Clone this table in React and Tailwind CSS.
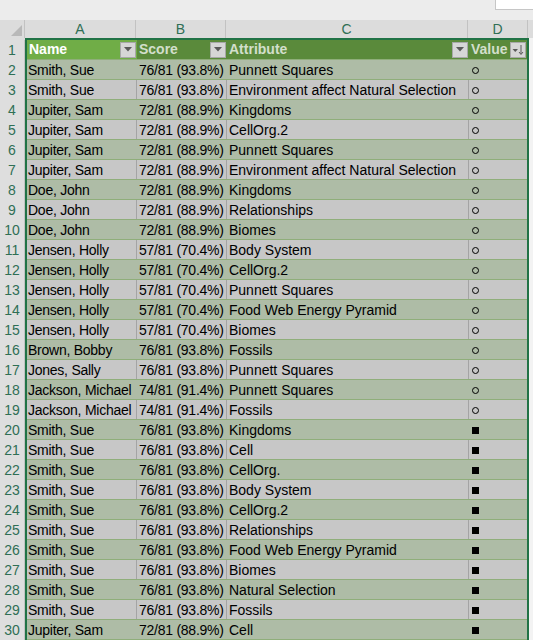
import React from 'react';

const rows = [
  ['Smith, Sue', '76/81 (93.8%)', 'Punnett Squares', 'o'],
  ['Smith, Sue', '76/81 (93.8%)', 'Environment affect Natural Selection', 'o'],
  ['Jupiter, Sam', '72/81 (88.9%)', 'Kingdoms', 'o'],
  ['Jupiter, Sam', '72/81 (88.9%)', 'CellOrg.2', 'o'],
  ['Jupiter, Sam', '72/81 (88.9%)', 'Punnett Squares', 'o'],
  ['Jupiter, Sam', '72/81 (88.9%)', 'Environment affect Natural Selection', 'o'],
  ['Doe, John', '72/81 (88.9%)', 'Kingdoms', 'o'],
  ['Doe, John', '72/81 (88.9%)', 'Relationships', 'o'],
  ['Doe, John', '72/81 (88.9%)', 'Biomes', 'o'],
  ['Jensen, Holly', '57/81 (70.4%)', 'Body System', 'o'],
  ['Jensen, Holly', '57/81 (70.4%)', 'CellOrg.2', 'o'],
  ['Jensen, Holly', '57/81 (70.4%)', 'Punnett Squares', 'o'],
  ['Jensen, Holly', '57/81 (70.4%)', 'Food Web Energy Pyramid', 'o'],
  ['Jensen, Holly', '57/81 (70.4%)', 'Biomes', 'o'],
  ['Brown, Bobby', '76/81 (93.8%)', 'Fossils', 'o'],
  ['Jones, Sally', '76/81 (93.8%)', 'Punnett Squares', 'o'],
  ['Jackson, Michael', '74/81 (91.4%)', 'Punnett Squares', 'o'],
  ['Jackson, Michael', '74/81 (91.4%)', 'Fossils', 'o'],
  ['Smith, Sue', '76/81 (93.8%)', 'Kingdoms', 'x'],
  ['Smith, Sue', '76/81 (93.8%)', 'Cell', 'x'],
  ['Smith, Sue', '76/81 (93.8%)', 'CellOrg.', 'x'],
  ['Smith, Sue', '76/81 (93.8%)', 'Body System', 'x'],
  ['Smith, Sue', '76/81 (93.8%)', 'CellOrg.2', 'x'],
  ['Smith, Sue', '76/81 (93.8%)', 'Relationships', 'x'],
  ['Smith, Sue', '76/81 (93.8%)', 'Food Web Energy Pyramid', 'x'],
  ['Smith, Sue', '76/81 (93.8%)', 'Biomes', 'x'],
  ['Smith, Sue', '76/81 (93.8%)', 'Natural Selection', 'x'],
  ['Smith, Sue', '76/81 (93.8%)', 'Fossils', 'x'],
  ['Jupiter, Sam', '72/81 (88.9%)', 'Cell', 'x'],
];

const FilterBtn = () => (
  <div className="w-[16px] h-[16px] bg-[#d6d6d6] border border-[#a8a8a8] flex items-center justify-center shrink-0">
    <svg width="8" height="5" viewBox="0 0 8 5">
      <path d="M0 0 L8 0 L4 4.5 Z" fill="#5a5a5a" />
    </svg>
  </div>
);

const SortBtn = () => (
  <div className="w-[16px] h-[16px] bg-[#d6d6d6] border border-[#a8a8a8] flex items-center justify-center shrink-0">
    <svg width="12" height="10" viewBox="0 0 12 10">
      <path d="M0.5 4 L6 4 L3.25 7 Z" fill="#5a5a5a" />
      <path d="M9 0 L9 9 M7 7 L9 9.5 L11 7" stroke="#5a5a5a" strokeWidth="1" fill="none" />
    </svg>
  </div>
);

export default function App() {
  return (
    <div className="w-[533px] h-[640px] overflow-hidden bg-[#f3f3f3] text-[14px] text-black" style={{ fontFamily: '"Liberation Sans", Arial, sans-serif' }}>
      {/* top strip */}
      <div className="h-[20px] bg-[#ececec] flex justify-end">
        <div className="w-[38px] h-[10px] bg-white border-l border-b border-[#c6c6c6]" />
      </div>

      {/* column letters */}
      <div className="flex h-[18px] bg-[#dcdcdc] text-[#2f6f55] leading-[19px]">
        <div className="w-[25px] relative border-r border-[#c2c2c2]">
          <svg className="absolute right-[2px] bottom-[2px]" width="11" height="11" viewBox="0 0 11 11">
            <path d="M11 0 L11 11 L0 11 Z" fill="#b8b8b8" />
          </svg>
        </div>
        <div className="w-[111px] text-center border-r border-[#c2c2c2]">A</div>
        <div className="w-[90px] text-center border-r border-[#c2c2c2]">B</div>
        <div className="w-[242px] text-center border-r border-[#c2c2c2]">C</div>
        <div className="w-[60px] text-center border-r border-[#c2c2c2]">D</div>
        <div className="flex-1" />
      </div>

      {/* green top border */}
      <div className="flex h-[2px]">
        <div className="w-[25px] bg-[#dcdcdc]" />
        <div className="w-[504px] bg-[#217346]" />
      </div>

      {/* header row 1 */}
      <div className="flex h-[20px]">
        <div className="w-[25px] bg-[#dedede] text-[#2f6f55] text-center leading-[21px] border-r border-[#c2c2c2]">1</div>
        <div className="w-[2px] bg-[#217346]" />
        <div className="flex font-bold border-b border-[#8fae7a]">
          <div className="w-[110px] bg-[#70ad47] text-white flex items-center justify-between pl-[2px] pr-[1px]">
            <span>Name</span>
            <FilterBtn />
          </div>
          <div className="w-[90px] bg-[#5a8a3b] text-[#d2dfcb] flex items-center justify-between pl-[2px] pr-[1px]">
            <span>Score</span>
            <FilterBtn />
          </div>
          <div className="w-[242px] bg-[#5a8a3b] text-[#d2dfcb] flex items-center justify-between pl-[2px] pr-[1px]">
            <span>Attribute</span>
            <FilterBtn />
          </div>
          <div className="w-[58px] bg-[#5a8a3b] text-[#d2dfcb] flex items-center justify-between pl-[2px] pr-[1px]">
            <span>Value</span>
            <SortBtn />
          </div>
        </div>
        <div className="w-[2px] bg-[#217346]" />
      </div>

      {rows.map((r, i) => {
        const green = i % 2 === 0;
        const bg = green ? 'bg-[#aebca6]' : 'bg-[#c7c7c7]';
        const vline = green ? 'border-r border-transparent' : 'border-r border-[#a4a4a4]';
        return (
          <div key={i} className="flex h-[20px]">
            <div className="w-[25px] bg-[#dedede] text-[#2f6f55] text-center leading-[21px] border-r border-[#c2c2c2]">
              {i + 2}
            </div>
            <div className="w-[2px] bg-[#217346]" />
            <div className={`flex border-b border-[#8fae7a] ${bg} leading-[21px]`}>
              <div className={`w-[110px] pl-[1px] tracking-[-0.25px] whitespace-nowrap overflow-hidden ${vline}`}>{r[0]}</div>
              <div className={`w-[90px] pl-[2px] tracking-[-0.25px] whitespace-nowrap overflow-hidden ${vline}`}>{r[1]}</div>
              <div className={`w-[242px] pl-[2px] whitespace-nowrap overflow-hidden ${vline}`}>{r[2]}</div>
              <div className="w-[58px] flex items-center pl-[3px] pt-[1px]">
                {r[3] === 'o' ? (
                  <span className="w-[7px] h-[7px] rounded-full border-[1.5px] border-black" />
                ) : (
                  <span className="w-[7px] h-[7px] bg-black" />
                )}
              </div>
            </div>
            <div className="w-[2px] bg-[#217346]" />
          </div>
        );
      })}
    </div>
  );
}
